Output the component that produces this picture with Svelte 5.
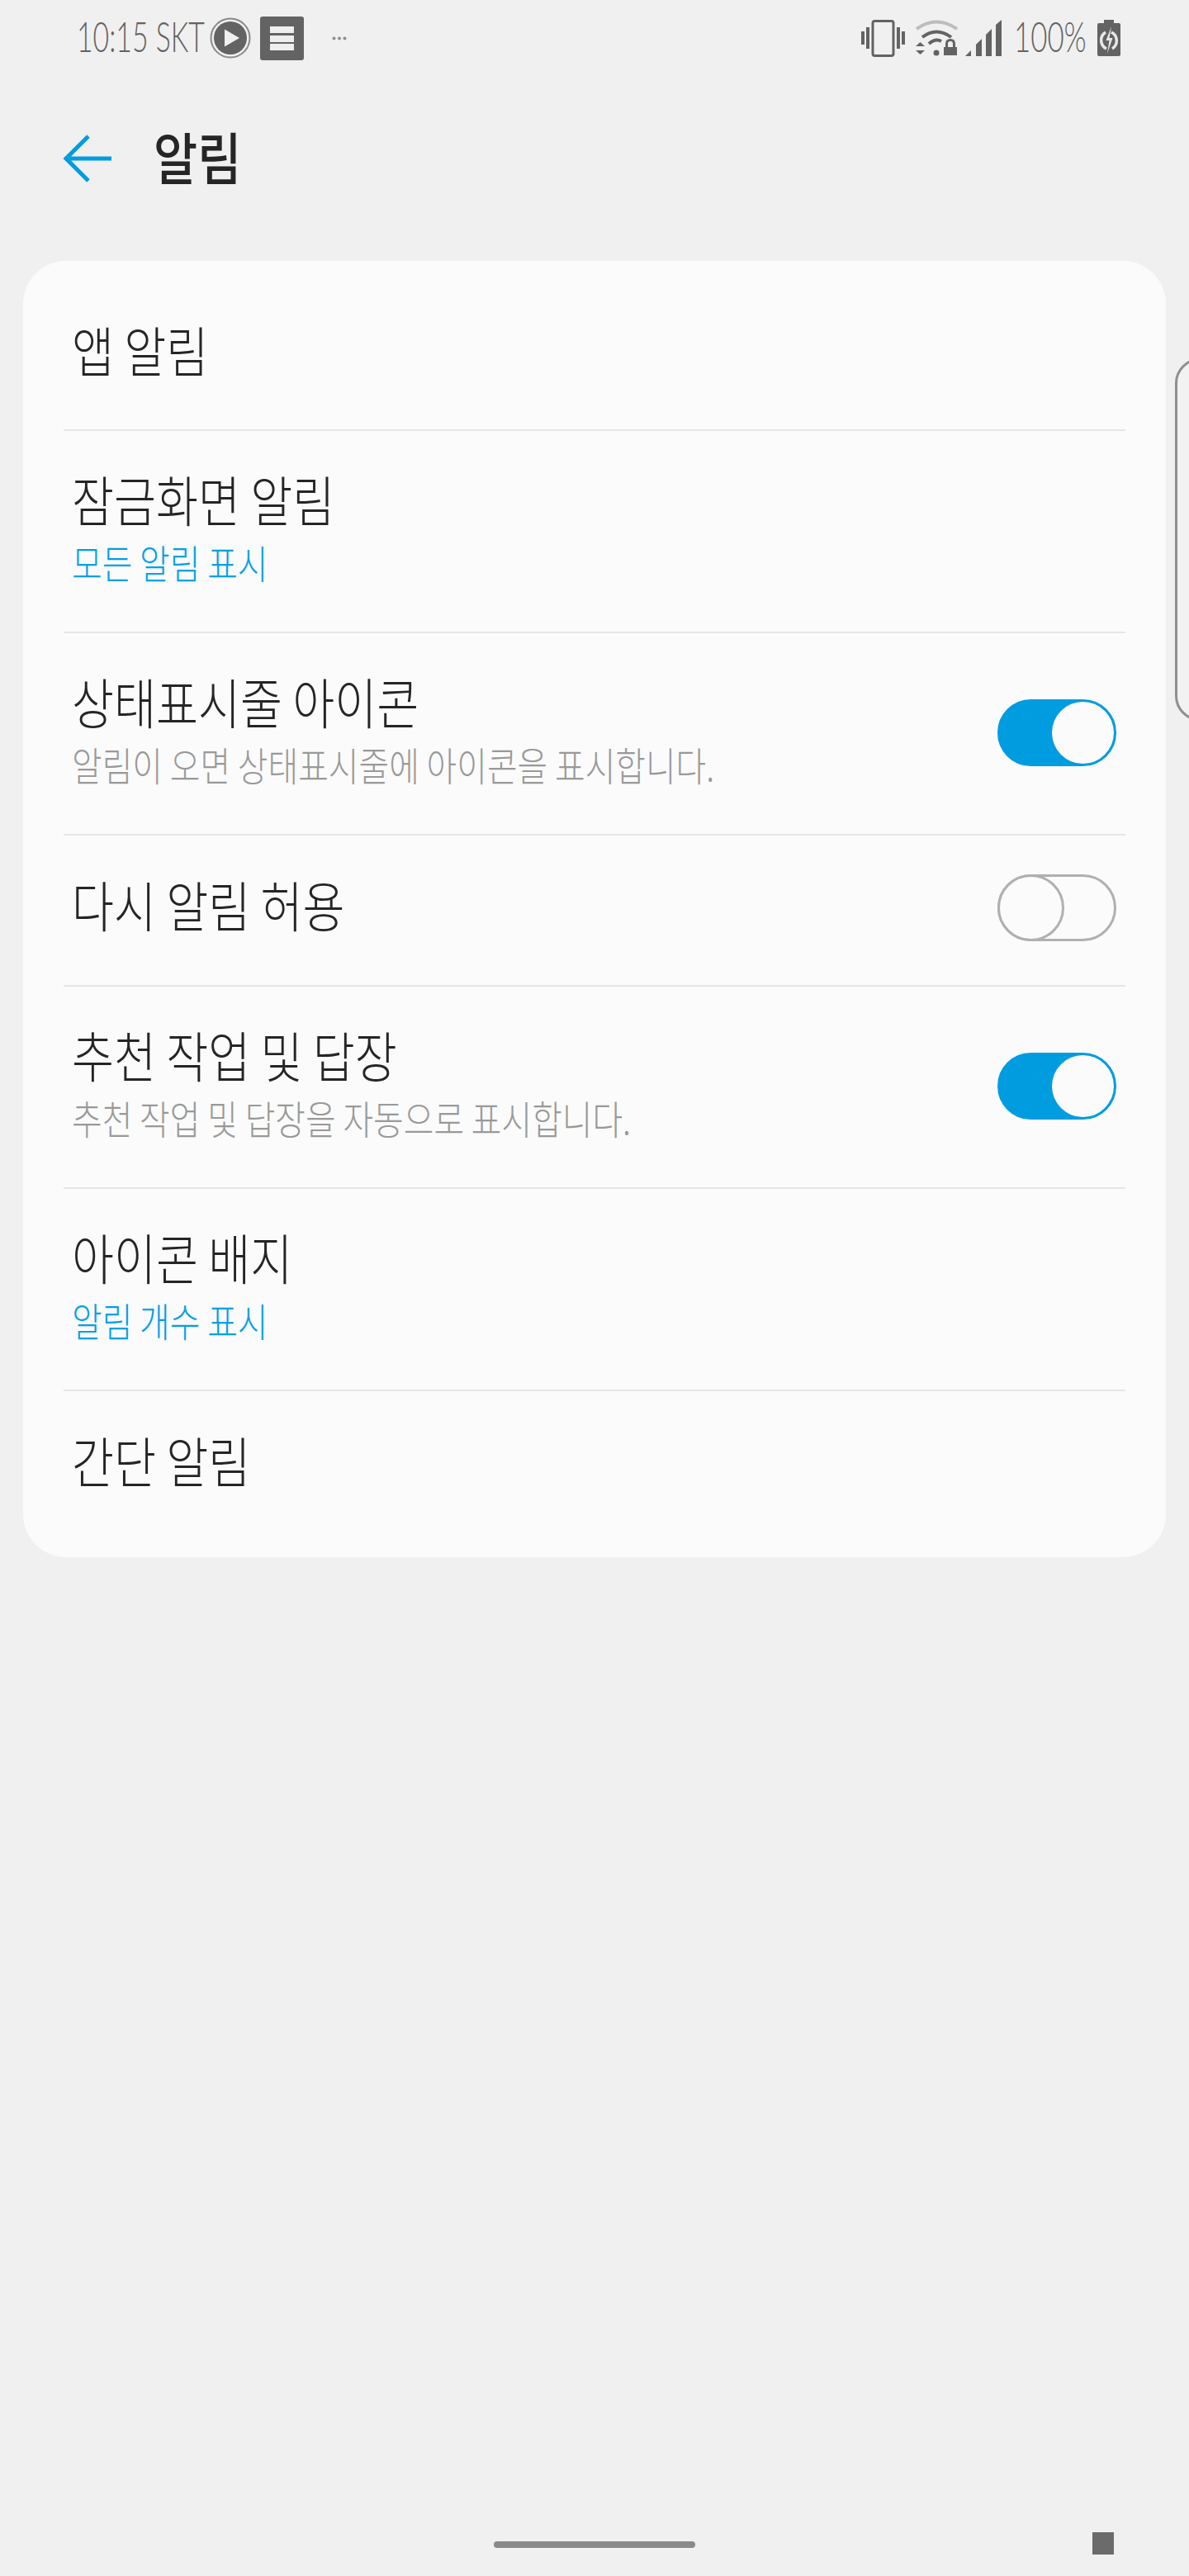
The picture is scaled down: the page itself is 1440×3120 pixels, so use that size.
<script lang="ts">
  type Row = {
    title: string;
    sub?: string;
    subTone?: 'blue' | 'grey';
    toggle?: boolean;
    kind: 'first' | 'mid' | 'tall' | 'last';
  };

  const rows: Row[] = [
    { title: '앱 알림', kind: 'first' },
    { title: '잠금화면 알림', sub: '모든 알림 표시', subTone: 'blue', kind: 'tall' },
    { title: '상태표시줄 아이콘', sub: '알림이 오면 상태표시줄에 아이콘을 표시합니다.', subTone: 'grey', toggle: true, kind: 'tall' },
    { title: '다시 알림 허용', toggle: false, kind: 'mid' },
    { title: '추천 작업 및 답장', sub: '추천 작업 및 답장을 자동으로 표시합니다.', subTone: 'grey', toggle: true, kind: 'tall' },
    { title: '아이콘 배지', sub: '알림 개수 표시', subTone: 'blue', kind: 'tall' },
    { title: '간단 알림', kind: 'last' }
  ];
</script>

<div class="screen">
  <div class="status">
    <span class="clock">10:15 SKT</span>
    <svg class="play" width="50" height="50" viewBox="0 0 50 50">
      <circle cx="25" cy="25" r="23.5" fill="none" stroke="#8a8a8a" stroke-width="2" />
      <circle cx="25" cy="25" r="20" fill="#636363" />
      <path d="M18 14.5 L36 25 L18 35.5 Z" fill="#f0f0f0" />
    </svg>
    <svg class="menu" width="53" height="53" viewBox="0 0 53 53">
      <rect width="53" height="53" rx="3" fill="#636363" />
      <rect x="12" y="12" width="29" height="8" fill="#eee" />
      <rect x="12" y="23" width="29" height="8" fill="#eee" />
      <rect x="12" y="33" width="29" height="8" fill="#eee" />
    </svg>
    <svg class="dots" width="18" height="5" viewBox="0 0 18 5">
      <circle cx="2.5" cy="2.5" r="2" fill="#8f8f8f" />
      <circle cx="9" cy="2.5" r="2" fill="#8f8f8f" />
      <circle cx="15.5" cy="2.5" r="2" fill="#8f8f8f" />
    </svg>

    <div class="status-right">
      <svg width="53" height="45" viewBox="0 0 53 45" fill="#636363">
        <rect x="0" y="14" width="4" height="16" />
        <rect x="6" y="9" width="4" height="26" />
        <rect x="14" y="1.500" width="25" height="42" rx="2.500" fill="none" stroke="#636363" stroke-width="3" />
        <rect x="43" y="9" width="4" height="26" />
        <rect x="49" y="14" width="4" height="16" />
      </svg>
      <svg class="wifi" width="51" height="44" viewBox="0 0 51 44">
        <path d="M1 11 Q25 -6 50 11" fill="none" stroke="#bdbdbd" stroke-width="4" />
        <path d="M8 21 Q25 8 43 21" fill="none" stroke="#636363" stroke-width="4" />
        <path d="M16 29 Q24 22 31 26" fill="none" stroke="#636363" stroke-width="4" />
        <circle cx="25" cy="40" r="3.500" fill="#636363" />
        <path d="M0 32 L5.500 27 L11 32 Z M0 37 L11 37 L5.500 42 Z" fill="#636363" />
        <rect x="34" y="33" width="16" height="10" fill="#636363" />
        <path d="M37.500 34 V29 Q37.500 24.500 42 24.500 Q46.500 24.500 46.500 29 V34" fill="none" stroke="#636363" stroke-width="3" />
      </svg>
      <svg class="signal" width="45" height="44" viewBox="0 0 45 44" fill="#636363">
        <path d="M0 44 L7 37 V44 Z" />
        <path d="M13 44 V30 L20 23 V44 Z" />
        <path d="M25 44 V18 L32 11 V44 Z" />
        <path d="M37 44 V6 L44 0 V44 Z" />
      </svg>
      <span class="pct">100%</span>
      <svg class="batt" width="28" height="44" viewBox="0 0 28 44">
        <path d="M8 0 H20 V4 H26 Q28 4 28 6 V42 Q28 44 26 44 H2 Q0 44 0 42 V6 Q0 4 2 4 H8 Z" fill="#636363" />
        <path d="M10 15 A11.500 11.500 0 0 0 11 35" fill="none" stroke="#e8e8e8" stroke-width="3.500" />
        <path d="M18 35 A11.500 11.500 0 0 0 17 15" fill="none" stroke="#e8e8e8" stroke-width="3.500" />
        <path d="M17 8 L10.500 25 H14.500 L12 41 L18.500 22 H14.500 Z" fill="#e8e8e8" />
      </svg>
    </div>
  </div>

  <header class="head">
    <svg class="back" width="60" height="60" viewBox="0 0 60 60">
      <path d="M59 30 H4 M31 3 L4 30 L31 57" fill="none" stroke="#009ce0" stroke-width="5" />
    </svg>
    <h1 class="page-title">알림</h1>
  </header>

  <section class="card">
    {#each rows as row, i}
      <div class="row {row.kind}" class:divided={i > 0}>
        <div class="texts">
          <span class="title">{row.title}</span>
          {#if row.sub}
            <span class="sub" class:blue={row.subTone === 'blue'}>{row.sub}</span>
          {/if}
        </div>
        {#if row.toggle !== undefined}
          <div class="toggle" class:on={row.toggle}><span class="knob"></span></div>
        {/if}
      </div>
    {/each}
  </section>

  <nav class="nav">
    <span class="home-bar"></span>
    <span class="square"></span>
  </nav>

  <div class="edge-handle"></div>
</div>

<style>
  :global(body) {
    margin: 0;
    background: #f0f0f0;
  }

  .screen {
    position: relative;
    width: 1440px;
    height: 3120px;
    overflow: hidden;
    display: flex;
    flex-direction: column;
    background: #f0f0f0;
    font-family: 'Noto Sans CJK KR', 'Noto Sans', sans-serif;
  }

  .status {
    height: 92px;
    display: flex;
    align-items: center;
    padding: 0 83px 0 93px;
    box-sizing: border-box;
  }

  .clock {
    font-family: Lato, sans-serif;
    font-weight: 300;
    font-size: 52px;
    line-height: 1;
    color: #636363;
    width: 161px;
    margin-bottom: 6px;
    white-space: nowrap;
    transform: scaleX(0.65);
    transform-origin: left center;
  }

  .menu {
    margin-left: 11px;
  }

  .dots {
    margin-left: 34px;
  }

  .status-right {
    margin-left: auto;
    display: flex;
    align-items: center;
    gap: 12px;
  }

  .wifi {
    margin-left: 1px;
  }

  .signal {
    margin-left: -3px;
  }

  .pct {
    font-family: Lato, sans-serif;
    font-weight: 300;
    font-size: 52px;
    line-height: 1;
    color: #636363;
    margin: 0 0 6px 2px;
    width: 89px;
    white-space: nowrap;
    transform: scaleX(0.67);
    transform-origin: left center;
  }

  .head {
    height: 200px;
    display: flex;
    align-items: center;
    padding-left: 76px;
  }

  .page-title {
    margin: 0 0 6px 50px;
    font-size: 68px;
    font-weight: 500;
    line-height: 1;
    color: #252525;
    transform: scaleX(0.85);
    transform-origin: left center;
  }

  .card {
    margin: 24px 28px 0;
    padding: 0 49px;
    background: #fbfbfb;
    border-radius: 52px;
    height: 1570px;
    box-sizing: border-box;
  }

  .row {
    display: flex;
    align-items: center;
    box-sizing: border-box;
    padding: 0 11px 0 10px;
  }

  .row.divided {
    border-top: 2px solid #e6e6e6;
  }

  .row.first {
    height: 204px;
    padding-top: 22px;
  }

  .row.tall {
    height: 245px;
  }

  .row.mid {
    height: 183px;
    padding-bottom: 4px;
  }

  .row.last {
    height: 203px;
    padding-bottom: 24px;
  }

  .texts {
    flex: 1;
    display: flex;
    flex-direction: column;
    align-items: flex-start;
    gap: 17px;
    padding-bottom: 14px;
    white-space: nowrap;
  }

  .title {
    font-size: 66px;
    font-weight: 300;
    line-height: 70px;
    color: #252525;
    transform: scaleX(0.84);
    transform-origin: left center;
  }

  .sub {
    font-size: 48px;
    font-weight: 300;
    line-height: 50px;
    color: #999;
    transform: scaleX(0.83);
    transform-origin: left center;
  }

  .sub.blue {
    color: #00a0e6;
  }

  .toggle {
    width: 144px;
    height: 81px;
    box-sizing: border-box;
    border-radius: 41px;
    border: 3px solid #b0b0b0;
    display: flex;
    justify-content: flex-start;
    align-items: center;
    margin-top: -2px;
  }

  .knob {
    width: 81px;
    height: 81px;
    margin: -3px;
    box-sizing: border-box;
    border-radius: 50%;
    border: 3px solid #b0b0b0;
    background: #fbfbfb;
  }

  .toggle.on {
    border-color: #009ce0;
    background: #009ce0;
    justify-content: flex-end;
  }

  .toggle.on .knob {
    width: 75px;
    height: 75px;
    margin: 0;
    border: none;
  }

  .nav {
    margin-top: auto;
    height: 40px;
    margin-bottom: 13px;
    display: flex;
    align-items: flex-start;
    padding-left: 598px;
  }

  .home-bar {
    width: 244px;
    height: 8px;
    margin-top: 11px;
    border-radius: 4px;
    background: #8a8a8a;
  }

  .square {
    width: 26px;
    height: 27px;
    margin-left: 481px;
    background: #6b6b6b;
  }

  .edge-handle {
    position: absolute;
    left: 1423px;
    top: 434px;
    width: 60px;
    height: 439px;
    box-sizing: border-box;
    border: 3px solid #8f8f8f;
    border-radius: 40px;
    background: #f2f2f2;
  }
</style>
